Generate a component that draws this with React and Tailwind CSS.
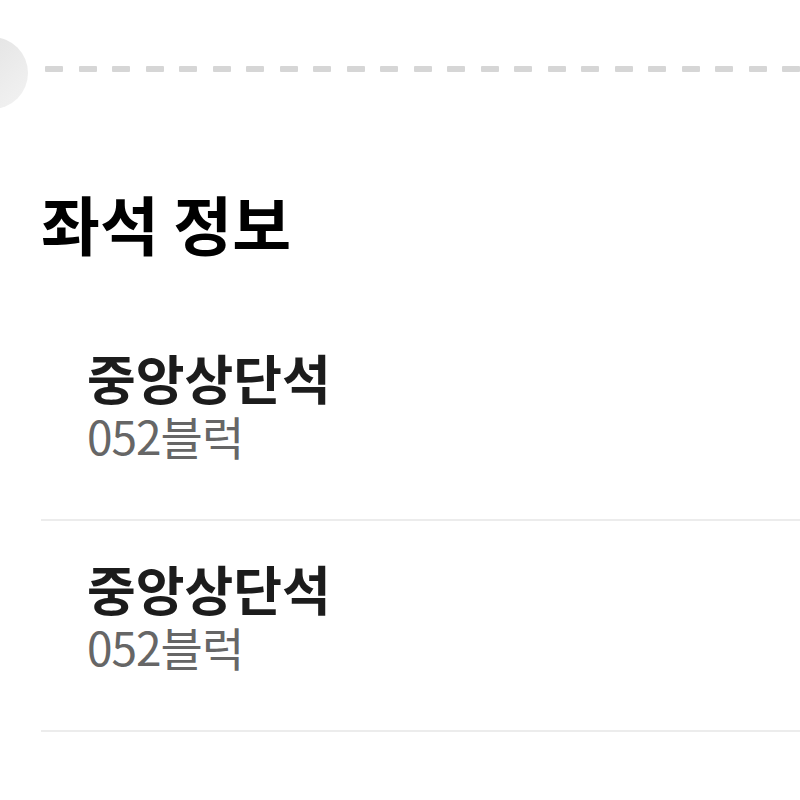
import React from 'react';

const seats = [
  { zone: '중앙상단석', block: '052블럭' },
  { zone: '중앙상단석', block: '052블럭' },
];

const font = { fontFamily: '"Noto Sans CJK KR", "Noto Sans", sans-serif' };

const SeatRow = ({ zone, block }) => (
  <div className="ml-[41px] border-b-2 border-[#ececec]">
    <div className="pl-[46px] pt-[41px] pb-[61px]">
      <p className="text-[53px] leading-none font-semibold text-[#1c1c1c]">{zone}</p>
      <p className="mt-[8px] text-[46px] leading-none font-normal text-[#666666] tracking-[-1px]">{block}</p>
    </div>
  </div>
);

export default function App() {
  return (
    <div className="relative w-full h-[800px] bg-white overflow-hidden" style={font}>
      {/* ticket notch on the left edge */}
      <div className="absolute -left-[44px] top-[37px] w-[72px] h-[72px] rounded-full bg-gradient-to-br from-[#e0e0e0] to-[#f3f3f3]" />

      <div className="flex gap-[15.5px] pl-[45px] pt-[66px] h-[72px]">
        {Array.from({ length: 24 }).map((_, i) => (
          <div key={i} className="w-[18px] h-[6px] shrink-0 bg-[#d6d6d6] rounded-[1px]" />
        ))}
      </div>

      <h2 className="mt-[118px] ml-[41px] text-[64px] leading-none font-bold text-black">좌석 정보</h2>

      <div className="mt-[56px]">
        {seats.map((s, i) => (
          <SeatRow key={i} zone={s.zone} block={s.block} />
        ))}
      </div>
    </div>
  );
}
